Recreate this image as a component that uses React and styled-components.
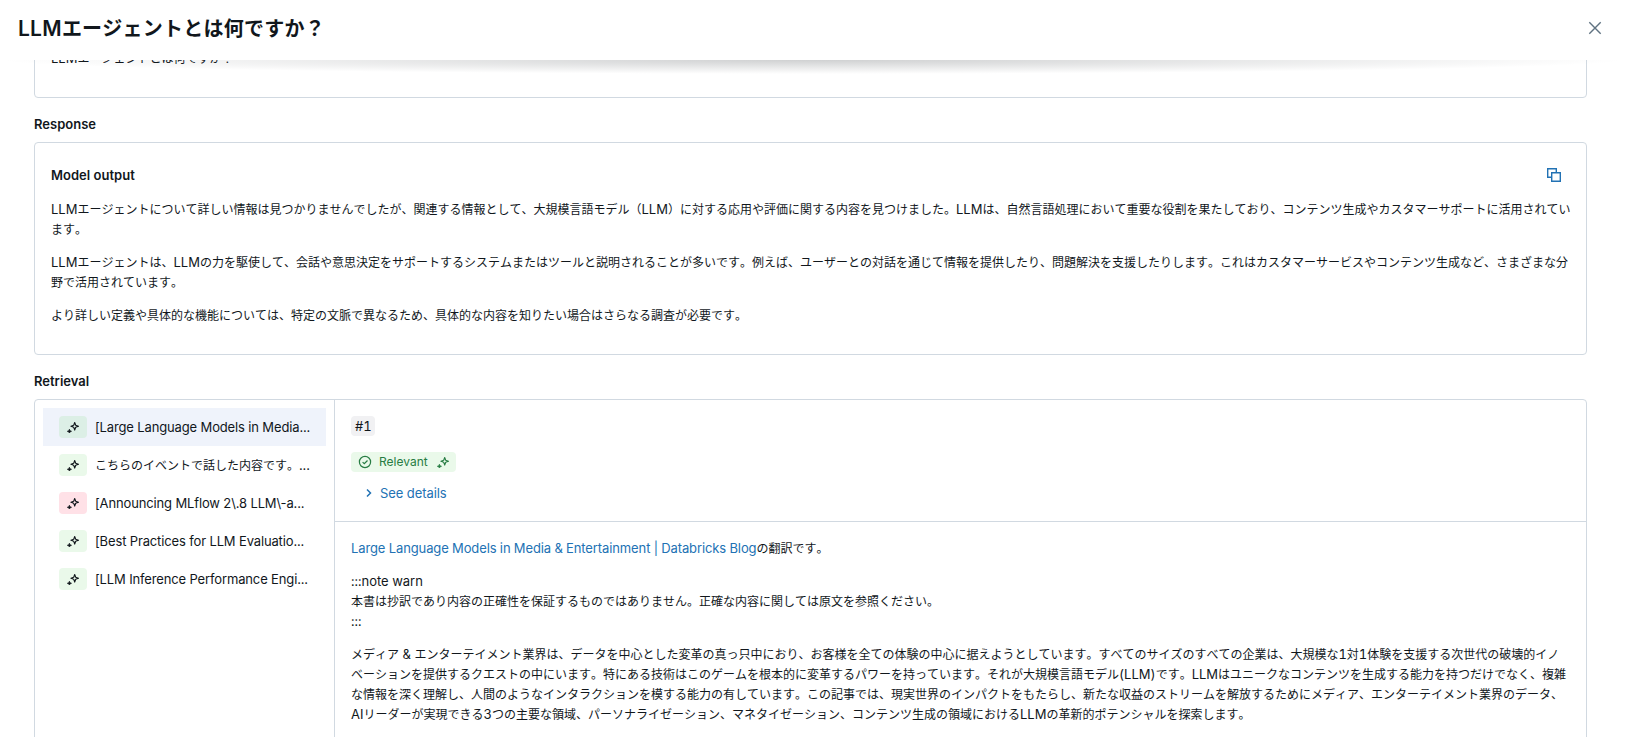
import { Fragment } from 'react';
import styled, { createGlobalStyle } from 'styled-components';

const GlobalStyle = createGlobalStyle`
  * {
    box-sizing: border-box;
  }

  body {
    margin: 0;
    background: #fff;
    color: #11171c;
    font-family: Inter, "Noto Sans CJK JP", sans-serif;
    font-size: 13px;
    line-height: 20px;
    overflow: hidden;
  }
`;

const documents = [
  { title: '[Large Language Models in Media...', relevant: true },
  { title: 'こちらのイベントで話した内容です。...', relevant: true },
  { title: '[Announcing MLflow 2\\.8 LLM\\-a...', relevant: false },
  { title: '[Best Practices for LLM Evaluatio...', relevant: true },
  { title: '[LLM Inference Performance Engi...', relevant: true },
];

const answer = [
  [
    'LLMエージェントについて詳しい情報は見つかりませんでしたが、関連する情報として、大規模言語モデル（LLM）に対する応用や評価に関する内容を見つけました。LLMは、自然言語処理において重要な役割を果たしており、コンテンツ生成やカスタマーサポートに活用されてい',
    'ます。',
  ],
  [
    'LLMエージェントは、LLMの力を駆使して、会話や意思決定をサポートするシステムまたはツールと説明されることが多いです。例えば、ユーザーとの対話を通じて情報を提供したり、問題解決を支援したりします。これはカスタマーサービスやコンテンツ生成など、さまざまな分',
    '野で活用されています。',
  ],
  [
    'より詳しい定義や具体的な機能については、特定の文脈で異なるため、具体的な内容を知りたい場合はさらなる調査が必要です。',
  ],
];

const note = [
  ':::note warn',
  '本書は抄訳であり内容の正確性を保証するものではありません。正確な内容に関しては原文を参照ください。',
  ':::',
];

const article = [
  'メディア & エンターテイメント業界は、データを中心とした変革の真っ只中におり、お客様を全ての体験の中心に据えようとしています。すべてのサイズのすべての企業は、大規模な1対1体験を支援する次世代の破壊的イノ',
  'ベーションを提供するクエストの中にいます。特にある技術はこのゲームを根本的に変革するパワーを持っています。それが大規模言語モデル(LLM)です。LLMはユニークなコンテンツを生成する能力を持つだけでなく、複雑',
  'な情報を深く理解し、人間のようなインタラクションを模する能力の有しています。この記事では、現実世界のインパクトをもたらし、新たな収益のストリームを解放するためにメディア、エンターテイメント業界のデータ、',
  'AIリーダーが実現できる3つの主要な領域、パーソナライゼーション、マネタイゼーション、コンテンツ生成の領域におけるLLMの革新的ポテンシャルを探索します。',
];

// Japanese runs are set one size smaller than the latin text around them
const MixedText = ({ children }) =>
  children
    .split(/([\u3000-\u9fff\uff00-\uffef]+)/)
    .filter(Boolean)
    .map((run, i) =>
      /[\u3000-\u9fff\uff00-\uffef]/.test(run) ? <Kana key={i}>{run}</Kana> : <Fragment key={i}>{run}</Fragment>
    );

const Lines = ({ lines }) => (
  <Paragraph>
    {lines.map((line, i) => (
      <Fragment key={i}>
        {i > 0 && <br />}
        <MixedText>{line}</MixedText>
      </Fragment>
    ))}
  </Paragraph>
);

const SparkleIcon = () => (
  <svg width="12" height="12" viewBox="0 0 12 12" fill="none" stroke="currentColor">
    <path d="M7.7 1.5 8.7 4.3l2.8 1-2.8 1-1 2.8-1-2.8-2.8-1 2.8-1z" strokeWidth="1.1" strokeLinejoin="round" />
    <path
      d="M2.4 8.2 3 9.7l1.5.6L3 10.9l-.6 1.1-.6-1.1-1.5-.6 1.5-.6z"
      fill="currentColor"
      strokeWidth=".7"
      strokeLinejoin="round"
    />
  </svg>
);

const CloseIcon = () => (
  <svg width="14" height="14" viewBox="0 0 14 14" fill="none" stroke="currentColor" strokeWidth="1.4">
    <path d="m1.3 1.3 11.4 11.4M12.7 1.3 1.3 12.7" />
  </svg>
);

const CopyIcon = () => (
  <svg width="14" height="14" viewBox="0 0 14 14" fill="none" stroke="currentColor" strokeWidth="1.4">
    <path d="M4.2 9.3H.7V.7h8.6v3.5" />
    <path d="M4.7 4.7h8.6v8.6H4.7z" />
  </svg>
);

const CheckCircleIcon = () => (
  <svg width="14" height="14" viewBox="0 0 14 14" fill="none" stroke="currentColor" strokeWidth="1.2">
    <circle cx="7" cy="7" r="5.6" />
    <path d="m4.6 7.1 1.7 1.6 3.2-3.2" />
  </svg>
);

const ChevronIcon = () => (
  <svg width="8" height="10" viewBox="0 0 8 10" fill="none" stroke="currentColor" strokeWidth="1.5">
    <path d="m2 1.4 3.5 3.6L2 8.6" />
  </svg>
);

const App = () => {
  return (
    <Page>
      <GlobalStyle />
      <Header>
        <Title>
          <span>LLM</span>エージェントとは何ですか？
        </Title>
        <CloseButton aria-label="Close">
          <CloseIcon />
        </CloseButton>
      </Header>
      <Content>
        <ScrollShadow />
        <RequestCard>
          <MixedText>LLMエージェントとは何ですか？</MixedText>
        </RequestCard>

        <SectionTitle>Response</SectionTitle>
        <ResponseCard>
          <CardHeader>
            <CardTitle>Model output</CardTitle>
            <CopyButton aria-label="Copy">
              <CopyIcon />
            </CopyButton>
          </CardHeader>
          {answer.map((lines, i) => (
            <Lines key={i} lines={lines} />
          ))}
        </ResponseCard>

        <SectionTitle>Retrieval</SectionTitle>
        <RetrievalCard>
          <Sidebar>
            {documents.map((doc, i) => (
              <DocumentRow key={doc.title} $active={i === 0}>
                <IconTag $relevant={doc.relevant} $active={i === 0}>
                  <SparkleIcon />
                </IconTag>
                <DocumentTitle>
                  <MixedText>{doc.title}</MixedText>
                </DocumentTitle>
              </DocumentRow>
            ))}
          </Sidebar>
          <Detail>
            <Assessment>
              <NumberTag>#1</NumberTag>
              <RelevantTag>
                <CheckCircleIcon />
                <span>Relevant</span>
                <SparkleIcon />
              </RelevantTag>
              <DetailsToggle>
                <ChevronIcon />
                See details
              </DetailsToggle>
            </Assessment>
            <Document>
              <Paragraph>
                <Link>Large Language Models in Media &amp; Entertainment | Databricks Blog</Link>
                <MixedText>の翻訳です。</MixedText>
              </Paragraph>
              <Lines lines={note} />
              <Lines lines={article} />
            </Document>
          </Detail>
        </RetrievalCard>
      </Content>
    </Page>
  );
};

const Page = styled.div`
  display: flex;
  flex-direction: column;
  height: 737px;
  overflow: hidden;
`;

const Header = styled.header`
  display: flex;
  flex: none;
  align-items: center;
  justify-content: space-between;
  height: 60px;
  padding: 0 24px 4px 18px;
`;

const Title = styled.h1`
  margin: 2px 0 0;
  font-size: 20px;
  font-weight: 600;
  font-kerning: none;
  letter-spacing: 0.25px;
  line-height: 28px;
  white-space: nowrap;

  span {
    font-size: 21px;
  }
`;

const CloseButton = styled.button`
  display: flex;
  padding: 0;
  border: 0;
  background: none;
  color: #5f7281;
`;

const Content = styled.main`
  position: relative;
  flex: 1;
  min-height: 0;
  padding: 0 39px 0 34px;
  overflow: hidden;
`;

const ScrollShadow = styled.div`
  position: absolute;
  top: 0;
  left: 0;
  right: 0;
  height: 14px;
  background: radial-gradient(farthest-side at 50% 0, rgba(17, 23, 28, 0.2), rgba(17, 23, 28, 0));
`;

const Card = styled.section`
  border: 1px solid #d1d9e1;
  border-radius: 4px;
`;

const RequestCard = styled(Card)`
  height: 58px;
  margin-top: -20px;
  padding: 7px 16px;
`;

const SectionTitle = styled.h2`
  margin: 16px 0 8px;
  font-size: 13px;
  font-weight: 600;
  line-height: 20px;
`;

const ResponseCard = styled(Card)`
  height: 213px;
  padding: 16px;
`;

const CardHeader = styled.div`
  display: flex;
  align-items: center;
  justify-content: space-between;
  height: 32px;
  margin-bottom: 8px;
  padding-right: 9px;
`;

const CardTitle = styled.h3`
  margin: 0;
  font-size: 13px;
  font-weight: 600;
  letter-spacing: 0.03px;
`;

const CopyButton = styled(CloseButton)`
  color: #2272b4;
`;

const Paragraph = styled.p`
  margin: 0 0 13px;
  font-variant-numeric: tabular-nums;
  white-space: nowrap;
`;

const Kana = styled.span`
  font-size: 12px;
  font-kerning: none;
  letter-spacing: 0;
  line-height: 1;
`;

const RetrievalCard = styled(Card)`
  display: flex;
  height: 400px;
`;

const Sidebar = styled.nav`
  flex: none;
  width: 300px;
  padding: 8px;
  border-right: 1px solid #d1d9e1;
`;

const DocumentRow = styled.div`
  display: flex;
  align-items: center;
  gap: 8px;
  height: 38px;
  padding: 0 16px;
  background: ${({ $active }) => ($active ? '#eff3fb' : 'transparent')};
`;

const IconTag = styled.span`
  display: flex;
  flex: none;
  align-items: center;
  justify-content: center;
  width: 28px;
  height: 22px;
  border-radius: 4px;
  background: ${({ $relevant, $active }) => ($active ? '#dcefe6' : $relevant ? '#eaf9ea' : '#ffe1e7')};
`;

const DocumentTitle = styled.span`
  white-space: nowrap;
  letter-spacing: -0.14px;
`;

const Detail = styled.div`
  flex: 1;
  min-width: 0;
`;

const Assessment = styled.div`
  display: flex;
  flex-direction: column;
  align-items: flex-start;
  height: 122px;
  padding: 16px;
  border-bottom: 1px solid #d1d9e1;
`;

const NumberTag = styled.span`
  width: 24px;
  padding-left: 4px;
  border-radius: 4px;
  background: #f1f1f3;
  font-variant-numeric: tabular-nums;
`;

const RelevantTag = styled.span`
  display: flex;
  align-items: center;
  height: 20px;
  margin-top: 16px;
  padding: 0 7px;
  border-radius: 4px;
  background: #eaf9ea;
  color: #277c43;
  font-size: 12px;

  span {
    margin: 0 9px 0 7px;
  }
`;

const DetailsToggle = styled.button`
  display: flex;
  align-items: center;
  gap: 7px;
  margin: 11px 0 0 14px;
  padding: 0;
  border: 0;
  background: none;
  color: #2272b4;
  font: inherit;
  letter-spacing: -0.08px;
`;

const Document = styled.div`
  padding: 16px;
`;

const Link = styled.a`
  color: #2272b4;
  letter-spacing: -0.11px;
`;

export default App;
